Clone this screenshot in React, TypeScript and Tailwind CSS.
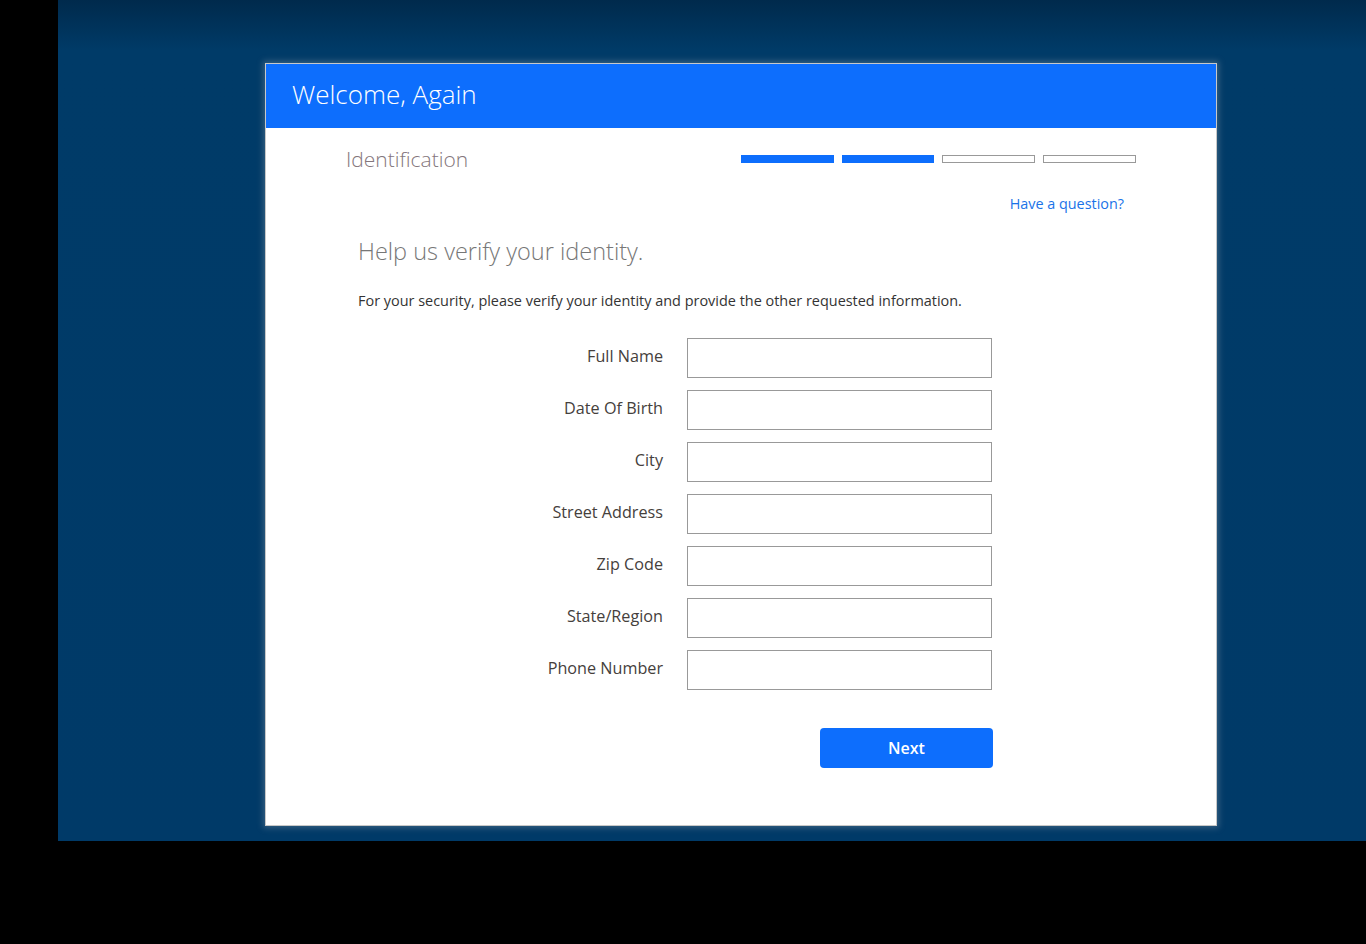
const fields = [
  'Full Name',
  'Date Of Birth',
  'City',
  'Street Address',
  'Zip Code',
  'State/Region',
  'Phone Number',
];

function StepBars() {
  return (
    <div className="flex gap-2">
      <div className="h-2 w-[93px] bg-[#0d6efd]" />
      <div className="h-2 w-[92px] bg-[#0d6efd]" />
      <div className="h-2 w-[93px] border border-[#999]" />
      <div className="h-2 w-[93px] border border-[#999]" />
    </div>
  );
}

export default function App() {
  return (
    <div className="flex h-[944px] w-full bg-black font-['Open_Sans',sans-serif]">
      <div className="ml-[58px] h-[841px] w-[1308px] bg-gradient-to-b from-[#002a4c] via-[#003b68] via-[6%] to-[#003a68] pl-[207px] pt-[63px]">
        <div className="flex h-[763px] w-[952px] flex-col border border-[#c8c8c8] bg-white shadow-[0_0_6px_2px_rgba(120,140,160,0.45)]">
          <header className="flex h-[64px] items-center bg-[#0d6efd] px-[26px] pb-1">
            <h1 className="text-[26px] font-light text-white">Welcome, Again</h1>
          </header>

          <div className="flex items-start justify-between pl-[80px] pr-[80px] pt-[17px]">
            <div className="text-[21px] font-light leading-[28px] text-[#84767c]">
              Identification
            </div>
            <div className="mt-[10px]">
              <StepBars />
            </div>
          </div>

          <div className="px-[92px]">
            <div className="mt-[21px] flex justify-end">
              <a className="text-[14.4px] leading-5 text-[#1a73e8]">Have a question?</a>
            </div>

            <h2 className="mt-[21px] text-[23.5px] font-light leading-8 text-[#777]">
              Help us verify your identity.
            </h2>

            <p className="mt-[24px] text-[14.45px] leading-5 text-[#333]">
              For your security, please verify your identity and provide the other requested
              information.
            </p>

            <div className="mt-[27px] flex flex-col gap-3">
              {fields.map((f) => (
                <div key={f} className="flex items-start">
                  <label className="w-[305px] pt-[6px] text-right text-[16.2px] leading-6 text-[#45403c]">
                    {f}
                  </label>
                  <input className="ml-[24px] h-10 w-[305px] border border-[#999] px-2 text-[15px] outline-none" />
                </div>
              ))}
            </div>

            <div className="mt-[38px] flex pl-[462px]">
              <button className="h-10 w-[173px] rounded bg-[#0d6efd] text-[16px] font-semibold text-white">
                Next
              </button>
            </div>
          </div>
        </div>
      </div>
    </div>
  );
}
